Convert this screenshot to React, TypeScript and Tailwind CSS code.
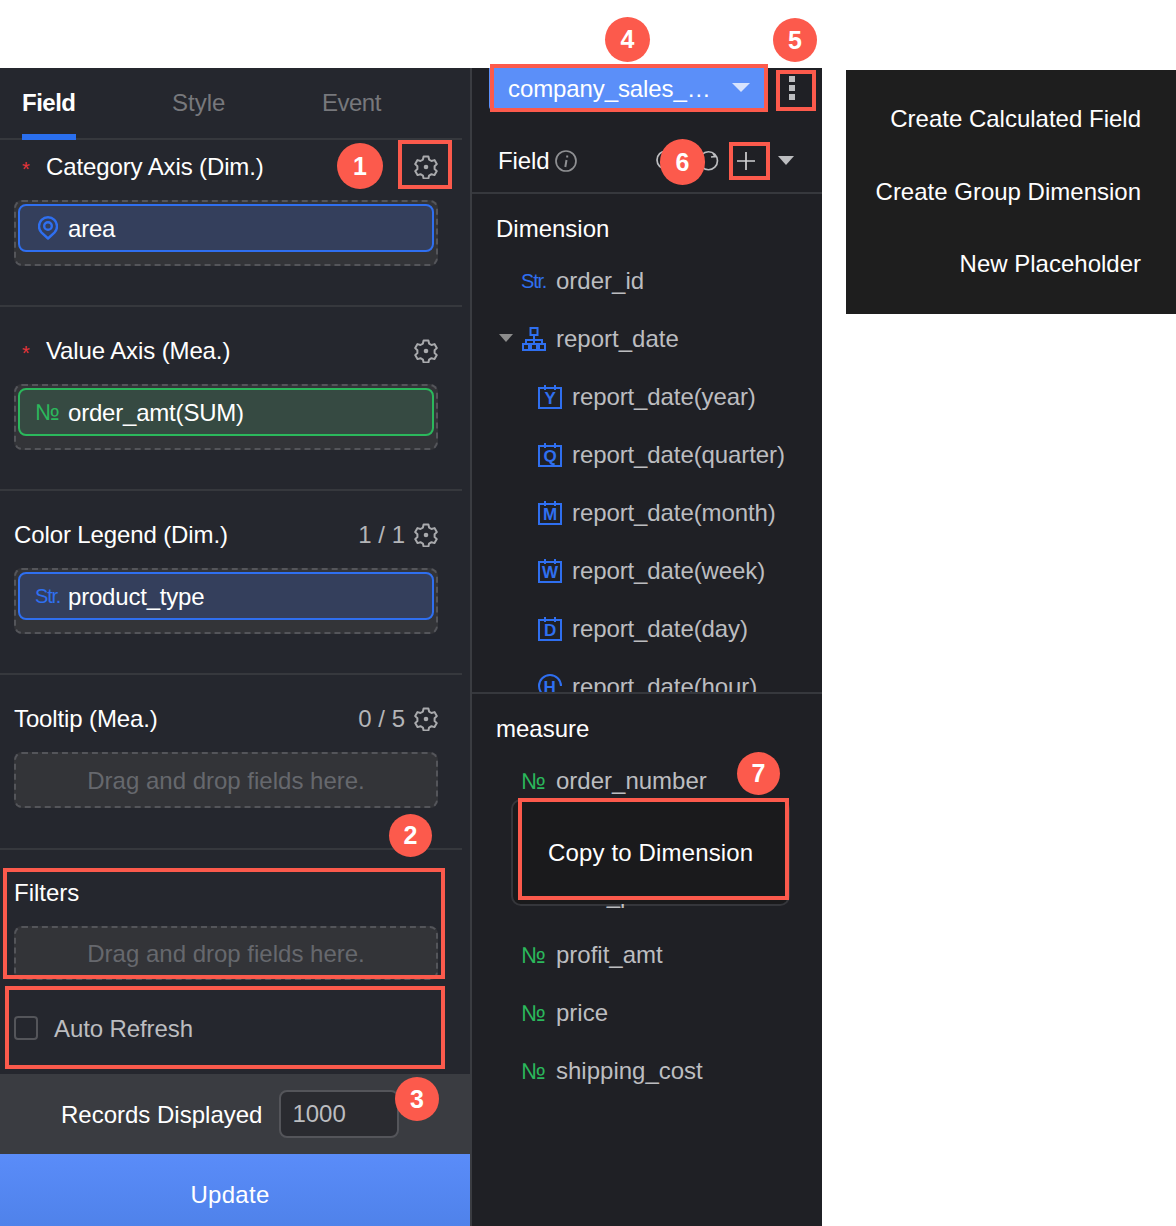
import React from "react";

const Gear = () => (
  <svg width="24" height="24" viewBox="0 0 24 24" fill="none" stroke="#a9aaad" strokeWidth="2" strokeLinejoin="round" className="shrink-0">
    <path d="M9.600 1.600h4.800l.7 3 2.400 1.400 3-.9 2.300 4-2.200 2.100v2.800l2.200 2.100-2.300 4-3-.9-2.400 1.400-.7 3H9.600l-.7-3-2.400-1.400-3 .9-2.300-4 2.200-2.100v-2.800l-2.200-2.100 2.300-4 3 .9 2.400-1.400z" />
    <circle cx="12" cy="12" r="2.300" fill="#a9aaad" stroke="none" />
  </svg>
);

const Badge = ({ n, className }: { n: string; className: string }) => (
  <div className={"absolute rounded-full bg-[#fc5a4c] text-white flex items-center justify-center text-[25px] font-bold pt-[1px] z-20 " + className}>{n}</div>
);
const RedBox = ({ className }: { className: string }) => (
  <div className={"absolute border-[4px] border-[#fc5a4c] z-10 pointer-events-none " + className} />
);

const Chip = ({ color, bg, icon, text }: { color: string; bg: string; icon: React.ReactNode; text: string }) => (
  <div className="h-[66px] ml-[14px] mr-[24px] rounded-[8px] border-2 border-dashed border-[#54555a] bg-[#333438] p-[2px]">
    <div className={"h-[48px] rounded-[8px] border-2 flex items-center pl-[15px] " + color + " " + bg}>
      <span className="w-[33px] shrink-0 flex">{icon}</span>
      <span className="text-white text-[24px] tracking-[-0.2px] pt-[1px]">{text}</span>
    </div>
  </div>
);

const StrIcon = () => <span className="text-[#2f6ff0] text-[20px] tracking-[-1.2px] leading-none">Str.</span>;
const NoIcon = () => <span className="text-[#2bb85c] text-[23px] leading-none">№</span>;

const Head = ({ label, right, req }: { label: string; right?: string; req?: boolean }) => (
  <div className="h-[34px] flex items-center pl-[14px] pr-[24px]">
    {req && <span className="text-[#e5343a] text-[20px] ml-[8px] w-[24px] mt-[4px]">*</span>}
    <span className="text-white text-[24px] tracking-[-0.12px] flex-1">{label}</span>
    {right && <span className="text-[#b4b5b8] text-[24px] mr-[9px]">{right}</span>}
    <Gear />
  </div>
);

const Section = ({ children, h }: { children: React.ReactNode; h: string }) => (
  <div className={h + " shrink-0 border-b-2 border-[#36383d] mr-[8px]"}>{children}</div>
);

const Empty = ({ h }: { h: string }) => (
  <div className={"ml-[14px] rounded-[8px] border-2 border-dashed border-[#54555a] bg-[#333438] flex items-center justify-center pt-[2px] text-[24px] text-[#66686d] " + h}>
    Drag and drop fields here.
  </div>
);

const Cal = ({ l }: { l: string }) => (
  <svg width="24" height="24" viewBox="0 0 24 24" className="shrink-0">
    <rect x="1" y="3" width="22" height="20" fill="none" stroke="#2f6ff0" strokeWidth="2" />
    <path d="M7 0v5M17 0v5" stroke="#2f6ff0" strokeWidth="2" />
    <text x="12" y="19" textAnchor="middle" fill="#2f6ff0" fontSize="17" fontWeight="700" fontFamily="Liberation Sans">{l}</text>
  </svg>
);

const Row = ({ icon, text, sub, caret }: { icon?: React.ReactNode; text: string; sub?: boolean; caret?: boolean }) => (
  <div className={"h-[58px] shrink-0 flex items-center relative " + (sub ? "pl-[66px] tracking-[-0.1px]" : "pl-[49px]")}>
    {caret && <span className="absolute left-[27px] top-[24px] w-0 h-0 border-x-[7px] border-x-transparent border-t-[8px] border-t-[#8c8c8c]" />}
    <span className={"shrink-0 flex items-center " + (sub ? "w-[34px]" : "w-[35px]")}>{icon}</span>
    <span className="text-[#bcbdc0] text-[24px] whitespace-nowrap">{text}</span>
  </div>
);

export default function App() {
  return (
    <div className="relative w-[1176px] h-[1226px] bg-white overflow-hidden flex font-['Liberation_Sans',sans-serif]">
      {/* left panel */}
      <div className="w-[470px] mt-[68px] bg-[#25272e] flex flex-col">
        <div className="h-[72px] shrink-0 flex border-b-2 border-[#36383d] mr-[8px]">
          <div className="w-[150px] pl-[22px] flex items-center text-[24px] font-bold text-white tracking-[-0.5px]">
            <span className="relative h-full flex items-center">Field<span className="absolute left-0 right-0 bottom-[-2px] h-[6px] bg-[#2a6fee]" /></span>
          </div>
          <div className="w-[150px] pl-[22px] flex items-center text-[24px] text-[#77787c]">Style</div>
          <div className="w-[150px] pl-[22px] flex items-center text-[24px] text-[#77787c] tracking-[-0.5px]">Event</div>
        </div>
        <Section h="h-[167px] pt-[10px]">
          <Head label="Category Axis (Dim.)" req />
          <div className="h-[16px]" />
          <Chip color="border-[#2f6ff0]" bg="bg-[#343f5c]" text="area" icon={
            <svg width="20" height="24" viewBox="0 0 20 24" fill="none" stroke="#2f6ff0" strokeWidth="2.400" className="ml-[3px]"><path d="M10 22.500 3.600 16.600A9 9 0 1 1 16.400 16.600z" strokeLinejoin="round" /><circle cx="10" cy="10" r="3.800" /></svg>
          } />
        </Section>
        <Section h="h-[184px] pt-[27px]">
          <Head label="Value Axis (Mea.)" req />
          <div className="h-[16px]" />
          <Chip color="border-[#2bb85c]" bg="bg-[#364a42]" text="order_amt(SUM)" icon={<NoIcon />} />
        </Section>
        <Section h="h-[184px] pt-[27px]">
          <Head label="Color Legend (Dim.)" right="1 / 1" />
          <div className="h-[16px]" />
          <Chip color="border-[#2f6ff0]" bg="bg-[#343f5c]" text="product_type" icon={<StrIcon />} />
        </Section>
        <Section h="h-[175px] pt-[27px]">
          <Head label="Tooltip (Mea.)" right="0 / 5" />
          <div className="h-[16px]" />
          <Empty h="h-[56px] mr-[24px]" />
        </Section>
        <div className="h-[224px] pt-[26px] shrink-0">
          <div className="h-[34px] flex items-center pl-[14px] text-white text-[24px]">Filters</div>
          <div className="h-[16px]" />
          <Empty h="h-[54px] mr-[32px]" />
          <div className="flex items-center pl-[14px] mt-[36px] h-[24px]">
            <span className="w-[24px] h-[24px] rounded-[4px] border-2 border-[#54555a] mr-[16px]" />
            <span className="text-[#bcbdc0] text-[24px] tracking-[-0.1px] pt-[2px]">Auto Refresh</span>
          </div>
        </div>
        <div className="h-[80px] shrink-0 bg-[#3a3c41] flex items-center pl-[61px]">
          <span className="text-white text-[24px] mr-[17px] pt-[2px]">Records Displayed</span>
          <div className="w-[120px] h-[48px] rounded-[8px] border-2 border-[#54555a] bg-[#2a2b30] flex items-center pl-[11px] text-[#bcbdc0] text-[24px]">1000</div>
        </div>
        <div className="h-[72px] shrink-0 bg-gradient-to-b from-[#5a8cf9] to-[#4f82ea] flex items-center justify-center text-white text-[24px] tracking-[0.3px] pr-[10px] pt-[10px]">Update</div>
      </div>
      {/* divider */}
      <div className="w-[2px] mt-[68px] bg-[#3a3c41]" />
      {/* right panel */}
      <div className="w-[350px] mt-[68px] bg-[#1f2025] flex flex-col relative">
        <div className="h-[48px] shrink-0 relative">
          <div className="absolute left-[17px] top-0 w-[277px] h-[42px] bg-[#5b8ff9] rounded-b-[4px] flex items-center pl-[19px] text-white text-[24px] tracking-[-0.1px]">
            <span>company_sales_…</span>
            <span className="absolute left-[243px] top-[15px] w-0 h-0 border-x-[9px] border-x-transparent border-t-[9px] border-t-[#d7e3fd]" />
          </div>
          <div className="absolute left-[317px] top-[8px] flex flex-col gap-[3px]">
            <span className="w-[6px] h-[6px] bg-[#bcbdc0]" />
            <span className="w-[6px] h-[6px] bg-[#bcbdc0]" />
            <span className="w-[6px] h-[6px] bg-[#bcbdc0]" />
          </div>
        </div>
        <div className="h-[78px] shrink-0 border-b-2 border-[#36383d] flex items-center pl-[26px] pr-[28px] pt-[13px]">
          <span className="text-white text-[24px] tracking-[-0.1px] mr-[4px]">Field</span>
          <svg width="24" height="24" viewBox="0 0 24 24" fill="none" stroke="#8f9093" strokeWidth="1.700"><circle cx="12" cy="12" r="10" /><path d="M13.200 6.500v2M12.500 11l-1.200 7" strokeWidth="2" /></svg>
          <div className="flex-1" />
          <svg width="22" height="22" viewBox="0 0 22 22" fill="none" stroke="#bcbdc0" strokeWidth="1.700" className="mr-[22px]"><circle cx="11" cy="10" r="9" /></svg>
          <svg width="20" height="22" viewBox="0 0 20 22" fill="none" stroke="#bcbdc0" strokeWidth="1.700" className="mr-[18px]"><path d="M3 4.500A9 9 0 1 1 3 17M14 3l2 3.500-4 .5" /></svg>
          <svg width="18" height="18" viewBox="0 0 18 18" stroke="#d0d0d2" strokeWidth="1.700" className="mr-[23px]"><path d="M9 0v18M0 9h18" /></svg>
          <span className="w-0 h-0 border-x-[8px] border-x-transparent border-t-[9px] border-t-[#bcbdc0]" />
        </div>
        <div className="h-[500px] shrink-0 overflow-hidden border-b-2 border-[#36383d]">
          <div className="h-[58px] pl-[24px] flex items-end text-white text-[24px] leading-[36px] pb-[5px]">Dimension</div>
          <Row icon={<StrIcon />} text="order_id" />
          <Row caret text="report_date" icon={
            <svg width="24" height="24" viewBox="0 0 24 24" fill="none" stroke="#2f6ff0" strokeWidth="2" className="mt-[-1px] ml-[1px]"><rect x="8.500" y="1" width="7" height="7" /><path d="M12 8v5M4 17v-4h16v4M12 13v4" /><rect x="1" y="17" width="6" height="6" /><rect x="9" y="17" width="6" height="6" /><rect x="17" y="17" width="6" height="6" /></svg>
          } />
          <Row sub icon={<Cal l="Y" />} text="report_date(year)" />
          <Row sub icon={<Cal l="Q" />} text="report_date(quarter)" />
          <Row sub icon={<Cal l="M" />} text="report_date(month)" />
          <Row sub icon={<Cal l="W" />} text="report_date(week)" />
          <Row sub icon={<Cal l="D" />} text="report_date(day)" />
          <Row sub text="report_date(hour)" icon={
            <svg width="24" height="24" viewBox="0 0 24 24" fill="none" stroke="#2f6ff0" strokeWidth="2" className="mt-[-2px]"><path d="M23 12A11 11 0 1 0 12 23" /><text x="11.500" y="19" textAnchor="middle" fill="#2f6ff0" stroke="none" fontSize="17" fontWeight="700" fontFamily="Liberation Sans">H</text></svg>
          } />
        </div>
        <div className="flex-1 relative">
          <div className="h-[58px] pl-[24px] flex items-end text-white text-[24px] pb-[5px] leading-[36px]">measure</div>
          <Row icon={<NoIcon />} text="order_number" />
          <div className="h-[56px]" />
          <div className="h-[60px]"><Row text="back_point" /></div>
          <Row icon={<NoIcon />} text="profit_amt" />
          <Row icon={<NoIcon />} text="price" />
          <Row icon={<NoIcon />} text="shipping_cost" />
          <div className="absolute left-[39px] top-[105px] w-[279px] h-[107px] bg-[#1a1a1c] bg-clip-padding border-2 border-[#ffffff1a] rounded-[10px] flex items-center pl-[35px] text-white text-[24px] tracking-[0.15px]">Copy to Dimension</div>
        </div>
      </div>
      {/* right menu */}
      <div className="ml-[24px] mt-[70px] w-[330px] h-[244px] bg-[#1e1e1e] flex flex-col items-end pr-[35px] pt-[13px] text-white text-[24px]">
        <div className="h-[72.5px] flex items-center">Create Calculated Field</div>
        <div className="h-[72.5px] flex items-center">Create Group Dimension</div>
        <div className="h-[72.5px] flex items-center">New Placeholder</div>
      </div>

      {/* annotations */}
      <RedBox className="left-[398px] top-[140px] w-[54px] h-[49px]" />
      <RedBox className="left-[3px] top-[868px] w-[442px] h-[111px]" />
      <RedBox className="left-[5px] top-[986px] w-[440px] h-[83px]" />
      <RedBox className="left-[490px] top-[64px] w-[278px] h-[48px]" />
      <RedBox className="left-[776px] top-[70px] w-[40px] h-[41px]" />
      <RedBox className="left-[729px] top-[142px] w-[41px] h-[38px]" />
      <RedBox className="left-[518px] top-[798px] w-[271px] h-[102px]" />
      <Badge n="1" className="left-[337px] top-[143px] w-[46px] h-[46px]" />
      <Badge n="2" className="left-[389px] top-[814px] w-[43px] h-[43px]" />
      <Badge n="3" className="left-[395px] top-[1077px] w-[44px] h-[44px]" />
      <Badge n="4" className="left-[605px] top-[17px] w-[45px] h-[45px]" />
      <Badge n="5" className="left-[773px] top-[18px] w-[44px] h-[44px]" />
      <Badge n="6" className="left-[660px] top-[139px] w-[45px] h-[46px]" />
      <Badge n="7" className="left-[737px] top-[752px] w-[43px] h-[43px]" />
    </div>
  );
}
